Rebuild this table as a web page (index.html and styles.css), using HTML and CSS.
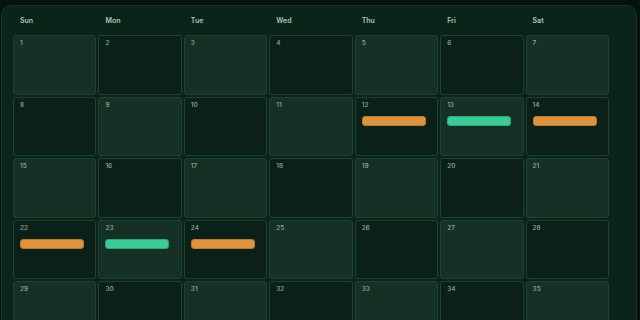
FILE: index.html
```html
<!DOCTYPE html>
<html lang="en">
<head>
<meta charset="utf-8">
<title>Calendar</title>
<link rel="stylesheet" href="styles.css">
</head>
<body>
<div class="panel">
  <div class="weekdays">
    <div class="wd">Sun</div><div class="wd">Mon</div><div class="wd">Tue</div><div class="wd">Wed</div><div class="wd">Thu</div><div class="wd">Fri</div><div class="wd">Sat</div>
  </div>
  <div class="grid">
    <div class="cell light"><span class="num">1</span></div>
    <div class="cell dark"><span class="num">2</span></div>
    <div class="cell light"><span class="num">3</span></div>
    <div class="cell dark"><span class="num">4</span></div>
    <div class="cell light"><span class="num">5</span></div>
    <div class="cell dark"><span class="num">6</span></div>
    <div class="cell light"><span class="num">7</span></div>

    <div class="cell dark"><span class="num">8</span></div>
    <div class="cell light"><span class="num">9</span></div>
    <div class="cell dark"><span class="num">10</span></div>
    <div class="cell light"><span class="num">11</span></div>
    <div class="cell dark"><span class="num">12</span><div class="bar orange"></div></div>
    <div class="cell light"><span class="num">13</span><div class="bar green"></div></div>
    <div class="cell dark"><span class="num">14</span><div class="bar orange"></div></div>

    <div class="cell light"><span class="num">15</span></div>
    <div class="cell dark"><span class="num">16</span></div>
    <div class="cell light"><span class="num">17</span></div>
    <div class="cell dark"><span class="num">18</span></div>
    <div class="cell light"><span class="num">19</span></div>
    <div class="cell dark"><span class="num">20</span></div>
    <div class="cell light"><span class="num">21</span></div>

    <div class="cell dark"><span class="num">22</span><div class="bar orange"></div></div>
    <div class="cell light"><span class="num">23</span><div class="bar green"></div></div>
    <div class="cell dark"><span class="num">24</span><div class="bar orange"></div></div>
    <div class="cell light"><span class="num">25</span></div>
    <div class="cell dark"><span class="num">26</span></div>
    <div class="cell light"><span class="num">27</span></div>
    <div class="cell dark"><span class="num">28</span></div>

    <div class="cell light"><span class="num">29</span></div>
    <div class="cell dark"><span class="num">30</span></div>
    <div class="cell light"><span class="num">31</span></div>
    <div class="cell dark"><span class="num">32</span></div>
    <div class="cell light"><span class="num">33</span></div>
    <div class="cell dark"><span class="num">34</span></div>
    <div class="cell light"><span class="num">35</span></div>
  </div>
</div>
</body>
</html>
```

FILE: styles.css
```css
html, body {
  margin: 0;
  padding: 0;
  overflow: hidden;
}
body {
  background: #06120e;
  font-family: Inter, "Noto Sans", sans-serif;
  width: 640px;
  height: 320px;
}
.panel {
  box-sizing: border-box;
  margin: 5px 0 0 1px;
  width: 636px;
  background: #0b2419;
  border: 1px solid #163526;
  border-radius: 10px;
  padding: 10px 27px 20px 11px;
}
.weekdays {
  display: grid;
  grid-template-columns: repeat(7, 1fr);
  gap: 2px;
  margin-bottom: 9px;
}
.wd {
  font-size: 7px;
  line-height: 10px;
  font-weight: 600;
  color: #b3c2ba;
  padding-left: 7px;
}
.grid {
  display: grid;
  grid-template-columns: repeat(7, 1fr);
  grid-auto-rows: 59.5px;
  gap: 2px;
}
.cell {
  box-sizing: border-box;
  border: 1px solid #1f4230;
  border-radius: 3px;
  padding: 3px 6px 0 6px;
  display: flex;
  flex-direction: column;
  align-items: flex-start;
}
.light { background: #153025; }
.dark { background: #0a2018; }
.num {
  font-size: 6.5px;
  line-height: 8px;
  font-weight: 500;
  color: #95aa9f;
}
.bar {
  margin-top: 7px;
  width: 64px;
  height: 10px;
  box-sizing: border-box;
  border-radius: 3px;
}
.orange { background: #de943f; border: 1px solid #b9772f; }
.green { background: #3ccb97; border: 1px solid #2ba77a; }
```
